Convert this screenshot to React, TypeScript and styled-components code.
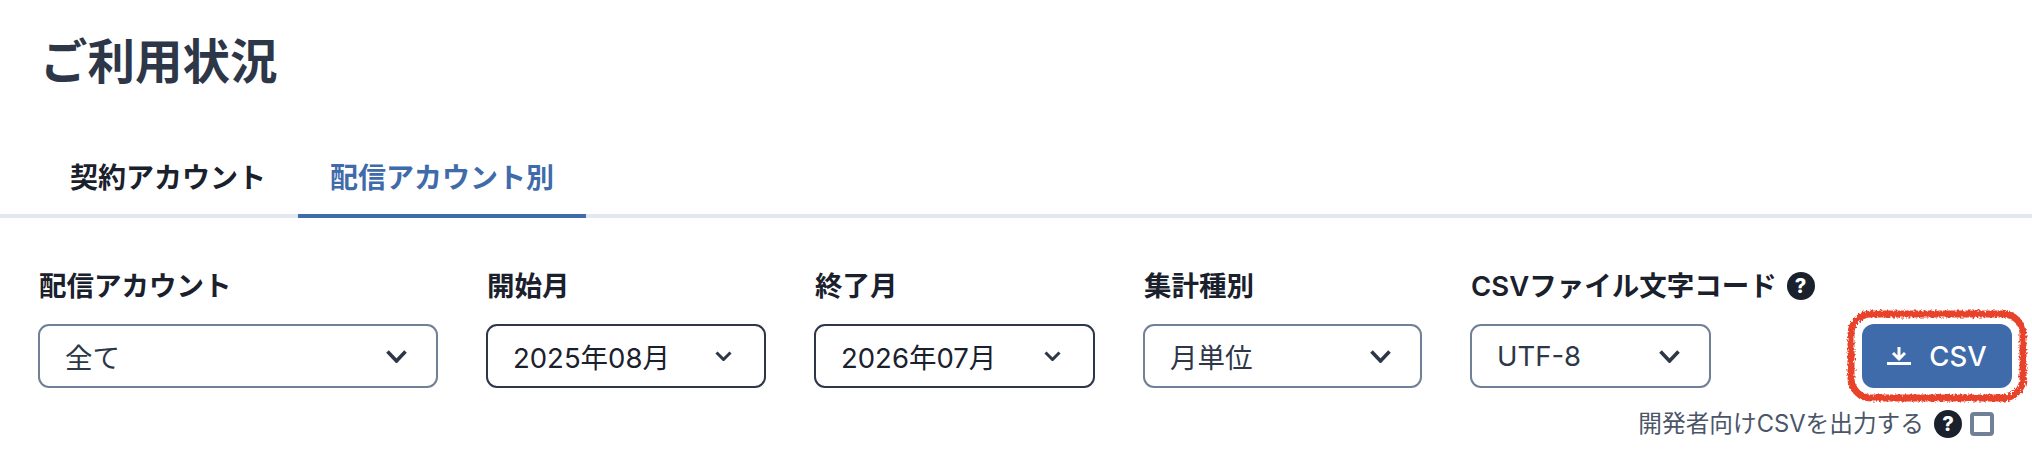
import styled, { createGlobalStyle } from "styled-components"

const GlobalStyle = createGlobalStyle`
    html, body {
        margin: 0;
        padding: 0;
        background: #fff;
        overflow: hidden;
    }
    body {
        font-family: Inter, "Noto Sans CJK JP", sans-serif;
        color: #1a202c;
    }
`

const Page = styled.div`
    width: 2032px;
    height: 450px;
`

const Title = styled.h1`
    margin: 0;
    padding: 32px 0 0 40px;
    font-size: 47.5px;
    line-height: 60px;
    font-weight: 600;
    color: #2d3748;
`

const TabList = styled.div`
    display: flex;
    margin-top: 46px;
    padding-left: 38px;
    height: 80px;
    box-sizing: border-box;
    border-bottom: 4px solid #e2e8f0;
`

const Tab = styled.div<{ $active?: boolean }>`
    height: 80px;
    box-sizing: border-box;
    padding: 0 32px;
    font-size: 28px;
    font-weight: 600;
    line-height: 80px;
    color: ${p => (p.$active ? "#3f6bab" : "#1a202c")};
    border-bottom: 4px solid ${p => (p.$active ? "#3f6bab" : "transparent")};
`

const FilterRow = styled.div`
    display: flex;
    align-items: flex-end;
    gap: 48px;
    margin-top: 50px;
    padding: 0 20px 0 38px;
`

const Field = styled.div<{ $width: number }>`
    display: flex;
    flex-direction: column;
    gap: 20px;
    width: ${p => p.$width}px;
`

const Label = styled.label`
    display: flex;
    align-items: center;
    gap: 10px;
    margin-left: 1px;
    font-size: 27.5px;
    font-weight: 600;
    line-height: 36px;
    white-space: nowrap;
`

const Select = styled.div<{ $dark?: boolean }>`
    display: flex;
    align-items: center;
    justify-content: space-between;
    height: 64px;
    box-sizing: border-box;
    padding: 0 ${p => (p.$dark ? 32 : 29)}px 0 25px;
    border: 2.5px solid ${p => (p.$dark ? "#2d3748" : "#718096")};
    border-radius: 11px;
    font-size: 27.5px;
    color: ${p => (p.$dark ? "#1a202c" : "#2d3748")};
`

const Chevron = styled.svg<{ $small?: boolean }>`
    flex: none;
    width: ${p => (p.$small ? 17 : 21)}px;
    height: ${p => (p.$small ? 10 : 13)}px;
    fill: none;
    stroke: #2d3748;
    stroke-width: ${p => (p.$small ? 3 : 3.6)};
`

const HelpIcon = styled.span`
    flex: none;
    width: 28px;
    height: 28px;
    border-radius: 50%;
    background: #1a202c;
    color: #fff;
    font-size: 20px;
    font-weight: 800;
    line-height: 28px;
    text-align: center;
`

const ButtonWrap = styled.div`
    position: relative;
    margin-left: auto;
`

const CsvButton = styled.button`
    display: flex;
    align-items: center;
    justify-content: center;
    gap: 18px;
    width: 150px;
    height: 64px;
    border: 0;
    border-radius: 12px;
    background: #3f6bab;
    color: #fff;
    font-family: inherit;
    font-size: 27.5px;
    font-weight: 500;
`

const Scribble = styled.svg`
    position: absolute;
    left: -20px;
    top: -19px;
    width: 190px;
    height: 102px;
    pointer-events: none;
`

const DevRow = styled.div`
    display: flex;
    align-items: center;
    justify-content: flex-end;
    gap: 8px;
    margin-top: 22px;
    padding-right: 38px;
    font-size: 23.7px;
    line-height: 24px;
    color: #4a5568;
`

const DevLabel = styled.span`
    margin-right: 2px;
`

const Checkbox = styled.span`
    width: 24px;
    height: 24px;
    box-sizing: border-box;
    border: 4px solid #718096;
    border-radius: 4px;
    background: #fff;
`

const SelectBox = (props: { value: string; dark?: boolean }) => (
    <Select $dark={props.dark}>
        <span>{props.value}</span>
        <Chevron $small={props.dark} viewBox={props.dark ? "0 0 17 10" : "0 0 21 13"}>
            {props.dark ? <path d="M1.5 1.5 8.5 8.5 15.5 1.5" /> : <path d="M1.5 1.5 10.5 11 19.5 1.5" />}
        </Chevron>
    </Select>
)

export default function App() {
    return (
        <Page>
            <GlobalStyle />
            <Title>ご利用状況</Title>
            <TabList>
                <Tab>契約アカウント</Tab>
                <Tab $active>配信アカウント別</Tab>
            </TabList>
            <FilterRow>
                <Field $width={400}>
                    <Label>配信アカウント</Label>
                    <SelectBox value="全て" />
                </Field>
                <Field $width={280}>
                    <Label>開始月</Label>
                    <SelectBox value="2025年08月" dark />
                </Field>
                <Field $width={281}>
                    <Label>終了月</Label>
                    <SelectBox value="2026年07月" dark />
                </Field>
                <Field $width={279}>
                    <Label>集計種別</Label>
                    <SelectBox value="月単位" />
                </Field>
                <Field $width={241}>
                    <Label>CSVファイル文字コード<HelpIcon>?</HelpIcon></Label>
                    <SelectBox value="UTF-8" />
                </Field>
                <ButtonWrap>
                    <CsvButton>
                        <svg width="24" height="18" viewBox="0 0 24 18" fill="none" stroke="#fff" strokeWidth="3">
                            <path d="M12 0V11M6 6 12 12 18 6M0 16.5H24" />
                        </svg>
                        CSV
                    </CsvButton>
                    <Scribble viewBox="0 0 190 102">
                        <defs>
                            <filter id="rough" x="-5%" y="-5%" width="110%" height="110%">
                                <feTurbulence type="fractalNoise" baseFrequency="0.45" numOctaves="2" seed="4" />
                                <feDisplacementMap in="SourceGraphic" scale="5" />
                            </filter>
                        </defs>
                        <rect x="9" y="9" width="172" height="84" rx="20" fill="none" stroke="#e8432a" strokeWidth="7" filter="url(#rough)" />
                    </Scribble>
                </ButtonWrap>
            </FilterRow>
            <DevRow>
                <DevLabel>開発者向けCSVを出力する</DevLabel>
                <HelpIcon>?</HelpIcon>
                <Checkbox />
            </DevRow>
        </Page>
    )
}
